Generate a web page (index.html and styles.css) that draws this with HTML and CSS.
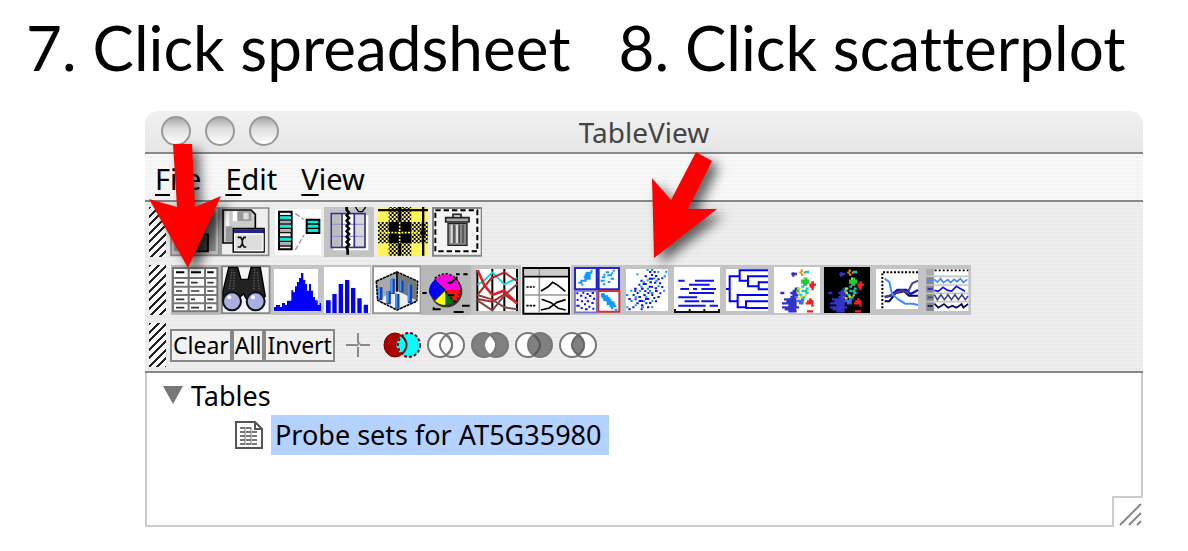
FILE: index.html
```html
<!DOCTYPE html>
<html lang="en">
<head>
<meta charset="utf-8">
<title>TableView</title>
<link rel="stylesheet" href="styles.css">
</head>
<body>
<header class="steps">
  <h1 class="step">7. Click spreadsheet</h1>
  <h1 class="step">8. Click scatterplot</h1>
</header>
<main class="window">
  <div class="titlebar">
    <div class="lights">
      <button class="light" aria-label="Close"></button>
      <button class="light" aria-label="Minimize"></button>
      <button class="light" aria-label="Zoom"></button>
    </div>
    <h2 class="title">TableView</h2>
  </div>
  <nav class="menubar">
    <button class="menu"><u>F</u>ile</button>
    <button class="menu"><u>E</u>dit</button>
    <button class="menu"><u>V</u>iew</button>
  </nav>
  <div class="toolbars">
    <div class="toolbar">
      <span class="grip"></span>
      <div class="tools">
        <button class="tool" aria-label="Open"><svg viewBox="0 0 150 150"><path fill="#bbb" stroke="#888" stroke-width="5" d="M3 3h144v142H3z"/><path fill="#888" d="M12 10h125v122H12z"/><path fill="#444" stroke="#000" stroke-width="5" d="M60 82h54v51H60z"/></svg></button>
        <button class="tool" aria-label="Save"><svg viewBox="0 0 150 150"><path fill="#eee" stroke="#888" stroke-width="5" d="M3 3h143v142H3z"/><path fill="#ccc" stroke="#000" stroke-width="5" d="M9 9h84l13 13v86H9z"/><path fill="#fff" d="M16 13h12v76H16zM38 13h15v30H38z"/><path fill="#999" d="M52 13h42v29H52zM17 58h20v46H17z"/><path fill="#ddd" d="M70 17h16v20H70z"/><path fill="#ddd" stroke="#000" stroke-width="5" d="M40 65h92v70H40z"/><path fill="#228" d="M42 67h88v12H42z"/><path stroke="#fff" stroke-width="4" fill="none" d="M44 81h85v50H44z"/><path stroke="#111" stroke-width="5" fill="none" d="M53 91h9l5 9v10l-6 10h-8M78 91h-6l-5 9v10l5 10h7"/></svg></button>
        <button class="tool tool-narrow" aria-label="Join columns"><svg viewBox="0 0 150 150"><path fill="#fff" d="M12 6h138v138H12z"/><path fill="#eee" stroke="#000" stroke-width="6" d="M24 14h38v113H24z"/><path stroke="#0ed" stroke-width="9" d="M27 32h32M27 58h32M27 97h32"/><path stroke="#aaa" stroke-width="8" d="M27 45h32M27 71h32M27 110h32"/><path stroke="#111" stroke-width="4" d="M24 26h38M24 39h38M24 51h38M24 64h38M24 77h38M24 90h38M24 103h38M24 117h38"/><path stroke="#999" stroke-width="4" stroke-dasharray="16 6" d="M73 20l25 17M73 129l26-45"/><path fill="#0ed" stroke="#000" stroke-width="6" d="M107 38h38v40h-38z"/><path stroke="#000" stroke-width="4" d="M107 51h38M107 64h38"/></svg></button>
        <button class="tool tool-wide" aria-label="Split table"><svg viewBox="12 21 150 150"><path fill="#c3c3c3" d="M12 21h150v150H12z"/><path fill="#fff" d="M40 45h105v106H40z"/><path fill="#d8d8d8" stroke="#33338a" stroke-width="5" d="M34 41h101v101H34z"/><path fill="#bbb" d="M37 44h24v95H37z"/><path fill="#fff" d="M69 44h31v95H69z"/><path stroke="#99c" stroke-width="4" d="M36 73h97M36 109h97"/><path stroke="#33338a" stroke-width="5" d="M66 41v101M103 41v101"/><path fill="none" stroke="#000" stroke-width="8" d="M80 21v9l7 8-7 8 7 8-7 8 7 8-7 8 7 8-7 8 7 8-7 8 7 8-7 8 7 8-7 8 3 8v14"/><path fill="none" stroke="#000" stroke-width="4" d="M106 21l10 14h11l10-14"/></svg></button>
        <button class="tool tool-wide" aria-label="Color matrix"><svg viewBox="175 21 150 150"><defs><pattern id="check" width="12" height="12" patternUnits="userSpaceOnUse"><path d="M0 0h6v6H0zM6 6h6v6H6z"/></pattern></defs><path fill="#fff557" d="M175 21h150v146H175z"/><path fill="url(#check)" d="M207 21h68v45h-68zM207 130h68v37h-68zM175 66h32v64h-32zM275 66h50v64h-50z"/><path d="M175 27h150v7H175zM307 21h7v146h-7zM236 21h8v146h-8zM207 66h68v64h-68z"/><path stroke="#fff557" stroke-width="5" stroke-dasharray="6 4" d="M175 98h150M240 67v63"/><circle cx="310" cy="98" r="9"/></svg></button>
        <button class="tool tool-wide" aria-label="Delete"><svg viewBox="336 21 150 150"><path fill="#f5f5f5" stroke="#888" stroke-width="6" d="M339 24h146v143H339z"/><path fill="none" stroke="#000" stroke-width="6" stroke-dasharray="16 9" d="M346 31h126v123H346z"/><path fill="none" stroke="#222" stroke-width="5" d="M399 52v-9h24v9"/><path fill="#888" stroke="#222" stroke-width="4" d="M384 70h57v66h-57z"/><path fill="#aaa" stroke="#222" stroke-width="5" d="M377 53h70v13h-70z"/><path stroke="#ddd" stroke-width="6" d="M395 74v55M411 74v55"/><path stroke="#444" stroke-width="4" d="M402 74v55M418 74v55M429 74v55"/></svg></button>
      </div>
    </div>
    <div class="toolbar">
      <span class="grip"></span>
      <div class="tools tools-plots">
        <button class="tool" aria-label="Spreadsheet"><svg viewBox="93 21 150 150"><path fill="#bbb" d="M93 21h150v150H93z"/><path fill="#fff" stroke="#777" stroke-width="6" d="M99 30h133v130H99z"/><path stroke="#777" stroke-width="6" d="M99 60h133M99 86h133M99 111h133M99 136h133M146 30v130M195 30v130"/><path stroke="#000" stroke-width="6" d="M108 43h25M153 43h30M202 43h19"/><path stroke="#333" stroke-width="5" d="M108 74h25M153 74h20M202 74h19M108 99h18M153 99h25M202 99h19M108 124h25M153 124h12M202 124h19M108 149h25M153 149h24M202 149h14"/></svg></button>
        <button class="tool" aria-label="Find"><svg viewBox="243 21 150 150"><path fill="#f4f4f4" stroke="#888" stroke-width="6" d="M246 25h143v141H246z"/><path fill="#222" stroke="#000" stroke-width="4" d="M266 28h27l10 36h21l9-36h28l15 87-20 20-39-14-6-14-15 14-47 8V99z"/><path stroke="#555" stroke-width="5" stroke-dasharray="4 4" d="M276 34l-8 64M283 42l-3 56M344 34l-3 64M352 42l6 56"/><circle cx="276" cy="130" r="27" fill="#aaaee2" stroke="#111" stroke-width="6"/><circle cx="347" cy="130" r="27" fill="#aaaee2" stroke="#111" stroke-width="6"/><circle cx="268" cy="118" r="6" fill="#fff"/><circle cx="339" cy="118" r="6" fill="#fff"/></svg></button>
        <button class="tool" aria-label="Density histogram"><svg viewBox="393 21 150 150"><path fill="#c4c3c6" d="M393 21h150v150H393z"/><path fill="#fff" d="M402 33h132v127H402z"/><path fill="#00f" d="M402 159v-12h6v-6h12v6h6v-12h9v6h6v-13h13V97h6v6h5V85h6V72h6V60h6V45h7v21h6v12h5v20h6V78h6v20h6v19h6v10h8v14h6v-6h7v12h6V159z"/></svg></button>
        <button class="tool" aria-label="Bar chart"><svg viewBox="3 21 150 150"><path fill="#c4c3c6" d="M3 21h150v150H3z"/><path fill="#fff" d="M12 27h138v138H12z"/><path fill="#00f" d="M18 127h14v38H18zM37 108h13v57H37zM56 78h13v87H56zM75 66h13v99H75zM93 90h13v75H93zM112 121h13v44h-13zM131 140h13v25h-13z"/></svg></button>
        <button class="tool" aria-label="3D plot"><svg viewBox="153 21 150 150"><path fill="#fff" stroke="#999" stroke-width="6" d="M159 25h143v141H159z"/><path fill="#aaa" stroke="#000" stroke-width="5" stroke-dasharray="9 2" d="M169 70l62-28 62 28-3 60-59 26-58-29z"/><path fill="#777" d="M233 46l57 25v56l-57-29z"/><path fill="#eee" d="M174 124l57-26 56 29-56 26z"/><path stroke="#000" stroke-width="5" d="M231 41v60"/><path stroke="#14b" stroke-width="13" d="M181 88v38M206 99v40M218 62v46M244 68v35M270 80v55M232 108v44"/><path stroke="#49f" stroke-width="6" d="M177 88v34M203 98v36M215 60v45M241 67v33M266 77v53M229 106v43"/></svg></button>
        <button class="tool" aria-label="Pie chart"><svg viewBox="303 21 150 150"><path fill="#b7b7b7" d="M303 21h150v150H303z"/><circle cx="379" cy="100" r="48" fill="#333"/><path fill="#f0d" d="M378 96l-34-30q14-17 36-17 38 4 42 47z"/><path fill="#00f" d="M376 94l-32-28q-18 13-17 37 4 15 20 21z"/><path fill="#f11" d="M376 96h46q0 22-17 36z"/><path fill="#ff0" d="M376 98v43q-18 0-31-12z"/><path fill="#070" d="M378 98v43q15-2 24-11z"/><path fill="none" stroke="#000" stroke-width="4" stroke-dasharray="7 5" d="M344 61q34-28 65 1 26 35-4 70M344 64l60 68"/><path fill="none" stroke="#000" stroke-width="6" d="M307 105h13M408 49h11M430 49h13M382 74h12l18-17M388 112h15M426 143h23M341 148v6h21M401 162h30"/></svg></button>
        <button class="tool" aria-label="Parallel coordinates"><svg viewBox="3 21 150 150"><path fill="#c4c3c6" d="M3 21h150v150H3z"/><path fill="#fff" d="M19 33h126v126H19z"/><path stroke="#000" stroke-width="6" d="M22 36v123M67 33v126M103 33v126M141 33v126"/><g fill="none" stroke-width="6"><path stroke="#0dd" d="M22 80l16-8 29-29 36 36 38-19"/><path stroke="#b22" d="M24 108l40-47 39-18 40 28M22 123l45 8 36-22 39 28"/><path stroke="#d22" stroke-width="8" d="M23 36l20 46 24 29 35-13 40 39"/><path stroke="#844" d="M22 127l45 30 38-47 37-32M22 111l44 13 37 24 39 6"/></g></svg></button>
        <button class="tool" aria-label="Profile table"><svg viewBox="153 21 150 150"><path fill="#fff" stroke="#000" stroke-width="6" d="M160 30h137v137H160z"/><path fill="#ccc" d="M163 33h131v20H163z"/><path stroke="#999" stroke-width="5" d="M163 111h131M208 33v131"/><path stroke="#000" stroke-width="5" d="M160 56h137"/><g fill="none" stroke="#000" stroke-width="5"><path stroke-dasharray="7 3" d="M169 87h25M169 143h30"/><path d="M213 99l20-12 15-14 16 9 22 18M215 124l28 10 22 17 22 5M213 156l25-6 23-17 26-8"/></g></svg></button>
        <button class="tool" aria-label="Scatterplot matrix"><svg viewBox="303 21 150 150"><path fill="#c4c3c6" d="M303 21h150v150H303z"/><path fill="#fff" stroke="#22d" stroke-width="6" d="M315 30h65v64h-65zM386 30h61v64h-61z"/><path fill="#fff" stroke="#77b" stroke-width="5" d="M315 99h65v64h-65z"/><path fill="#fff" stroke="#c33" stroke-width="6" d="M385 99h63v62h-63z"/><path stroke="#19f" stroke-width="6" d="M362 38h6M347 44h20M344 50h18M341 56h21M343 62h19M331 68h19M325 74h12M334 80h6M428 38h6M407 43h10M424 46h6M400 50h6M412 52h14M396 58h10M422 62h10M392 68h12M413 72h8M398 79h8M393 109h12M393 115h22M397 121h24M400 127h25M410 133h23M410 139h26M419 145h20M423 151h7M434 155h8"/><path stroke="#11f" stroke-width="6" d="M319 106h6M337 104h6M350 108h6M365 105h7M330 113h7M344 119h6M357 114h7M369 122h6M320 126h6M333 130h6M350 130h7M364 135h7M319 143h10M342 139h6M355 146h6M332 150h6M345 154h8M367 152h6"/></svg></button>
        <button class="tool" aria-label="Scatterplot"><svg viewBox="3 21 150 150"><path fill="#c4c3c6" d="M3 21h150v150H3z"/><path fill="#fff" d="M18 33h126v126H18z"/><g stroke-width="6"><path stroke="#11e" d="M87 42h7M101 42h6M74 55h7M93 51h6M105 54h7M61 68h7M86 62h13M112 64h7M124 61h6M42 92h8M55 80h6M68 78h12M88 73h8M102 74h7M117 76h6M43 99h6M50 105h6M63 92h8M73 99h6M86 86h13M104 91h7M124 87h6M38 111h6M55 117h8M70 111h7M82 105h6M94 111h6M105 99h8M118 106h6M25 123h7M44 124h6M56 129h13M75 123h13M100 120h6M112 117h7M25 154h7M37 148h6M49 136h7M63 142h7M76 136h6M87 135h7M81 148h7M105 130h6M62 154h6"/><path stroke="#19f" d="M49 49h6M80 36h6M93 36h7M112 42h6M136 41h6M99 61h7M80 67h6M68 73h7M106 68h7M131 55h7M61 86h7M80 92h7M112 85h7M31 98h6M57 99h6M87 99h6M129 98h7M18 111h7M44 117h6M92 105h8M76 117h6M31 129h7M69 130h6M94 129h6M19 148h6M44 142h6M64 148h8M93 148h7"/></g></svg></button>
        <button class="tool" aria-label="Intervals"><svg viewBox="153 21 150 150"><path fill="#c4c3c6" d="M153 21h150v150H153z"/><path fill="#fff" d="M162 27h138v138H162z"/><path stroke="#11e" stroke-width="6" d="M175 68h19M225 68h57M207 80h62M181 93h26M219 93h12M244 93h44M207 105h75M175 118h56M194 130h44M244 130h38M175 143h82M269 143h25"/><path fill="none" stroke="#111" stroke-width="6" d="M165 153v9h132v-9M209 153v9M253 153v9"/></svg></button>
        <button class="tool" aria-label="Dendrogram"><svg viewBox="303 21 150 150"><path fill="#c4c3c6" d="M303 21h150v150H303z"/><path fill="#fff" d="M318 33h126v126H318z"/><path fill="none" stroke="#00f" stroke-width="6" d="M318 93h11M359 55h-30v75h24M444 37h-85v31h25M444 55h-60v30h32M444 73h-28v21h28M444 111h-91v37h25M444 130h-66v20h66"/></svg></button>
        <button class="tool" aria-label="Colored scatterplot"><svg viewBox="3 21 150 150"><defs><g id="cluster" fill="none" stroke-width="7"><path stroke="#33c" d="M64 48h17M70 43v13M31 105h12M74 92h13M68 99h20M61 105h19M67 111h18M61 117h17M42 124h37M49 130h31M36 136h44M55 142h25M36 148h51M44 154h35M55 160h25"/><path stroke="#46e" d="M74 118h10M87 136h14M93 124h10M79 129h22"/><path stroke="#e80" d="M92 38h7M88 44h7M101 44h5M93 50h7"/><path stroke="#0cc" d="M105 42h12M94 86h8M107 92h9M94 99h10M106 105h10M88 111h9M93 118h14"/><path stroke="#2c3" d="M101 62h11M93 68h25M93 74h25M99 80h13M78 99h9M104 99h8"/><path stroke="#cd1" d="M99 62h5M81 92h10M82 105h8M91 116h8M81 121h8M104 112h6"/><path stroke="#e22" d="M124 73h8M118 80h20M119 86h14M124 93h7M117 124h8M111 130h20M107 136h23M124 143h7M111 160h18"/></g></defs><path fill="#c4c3c6" d="M3 21h150v150H3z"/><path fill="#fff" d="M12 27h138v138H12z"/><use href="#cluster"/></svg></button>
        <button class="tool" aria-label="Colored scatterplot on black"><svg viewBox="153 21 150 150"><path fill="#c4c3c6" d="M153 21h150v150H153z"/><path d="M162 27h138v138H162z"/><use href="#cluster" x="144"/></svg></button>
        <button class="tool" aria-label="Line chart"><svg viewBox="303 21 150 150"><path fill="#c4c3c6" d="M303 21h150v150H303z"/><path fill="#fff" d="M318 33h126v120H318z"/><path fill="none" stroke="#000" stroke-width="6" stroke-dasharray="6 5" d="M444 43H337v110"/><g fill="none" stroke-width="6"><path stroke="#11c" stroke-width="7" d="M344 117l18-4 20-17h27l13 12 22-12"/><path stroke="#006" d="M344 130h14l18-24 26-6 15 13h27"/><path stroke="#448" d="M344 118l32-12 22-9 14 8 15-29 17-8"/><path stroke="#48f" d="M344 62l14 10 8 36 20 17 20 12h22l16 4"/></g></svg></button>
        <button class="tool" aria-label="Traces"><svg viewBox="453 21 150 150"><path fill="#c4c3c6" d="M453 21h150v150H453z"/><path fill="#fff" d="M493 33h102v126H493z"/><path fill="#888" d="M469 55h22v104h-22z"/><path fill="#aaa" d="M469 33h22v20h-22z"/><path stroke="#c4c3c6" stroke-width="5" d="M469 55h126M469 81h126M469 106h126M469 131h126"/><path stroke="#000" stroke-width="5" stroke-dasharray="6 6" d="M494 37h101"/><g fill="none" stroke-width="5"><path stroke="#48f" d="M473 68h15M493 64l9 8 10-10 8 12 13-9 9 9 10-10 9 7 10-9 9 11 12-9"/><path stroke="#11e" d="M473 93h15M493 97l12 3 14-12 14 9 12 2 14-14 14 8 12 7"/><path stroke="#448" d="M473 118h15M493 110l9 15 11-15 10 15 11-15 10 15 11-15 10 15 11-15 10 15 8-11"/><path stroke="#006" d="M473 144h15M493 137l12 12 17-11 12 11 13-6 12 6 16-11 5 11 14-11"/></g></svg></button>
      </div>
    </div>
    <div class="toolbar">
      <span class="grip grip-short"></span>
      <div class="selectors">
        <button class="select">Clear</button>
        <button class="select">All</button>
        <button class="select">Invert</button>
      </div>
      <svg class="cross" viewBox="0 0 24 26"><path stroke="#888" stroke-width="2" fill="none" d="M0 13h10M14 13h10M12 1v10M12 15v10M10 14l4-3"/></svg>
      <div class="venns">
        <button class="venn" aria-label="Replace"><svg viewBox="0 0 38 26"><ellipse cx="26" cy="13" rx="11" ry="12" fill="#0ff"/><ellipse cx="12" cy="13" rx="11" ry="12" fill="#a00" stroke="#700"/><path fill="#0ff" d="M19 3q-11 10 0 20 9-10 0-20"/><ellipse cx="26" cy="13" rx="11" ry="12" fill="none" stroke="#800" stroke-width="2" stroke-dasharray="3 2"/><path fill="none" stroke="#700" stroke-width="2" d="M19 4q9 9 0 18"/></svg></button>
        <button class="venn" aria-label="Exclude"><svg viewBox="0 0 38 26"><g fill="#fff" stroke="#777" stroke-width="2"><ellipse cx="25" cy="13" rx="12" ry="12"/><ellipse cx="13" cy="13" rx="12" ry="12"/><path d="M19 3q-12 10 0 20 12-10 0-20"/></g></svg></button>
        <button class="venn" aria-label="Difference"><svg viewBox="0 0 38 26"><g fill="#808080" stroke="#777" stroke-width="2"><ellipse cx="25" cy="13" rx="12" ry="12"/><ellipse cx="13" cy="13" rx="12" ry="12"/></g><path fill="#fff" d="M19 4q-10 9 0 18 10-9 0-18"/></svg></button>
        <button class="venn" aria-label="Right set"><svg viewBox="0 0 38 26"><ellipse cx="13" cy="13" rx="12" ry="12" fill="#fff" stroke="#777" stroke-width="2"/><ellipse cx="25" cy="13" rx="12" ry="12" fill="#808080" stroke="#777" stroke-width="2"/><path fill="none" stroke="#555" stroke-width="2" d="M19 3q12 10 0 20"/></svg></button>
        <button class="venn" aria-label="Intersect"><svg viewBox="0 0 38 26"><g fill="#fff" stroke="#777" stroke-width="2"><ellipse cx="25" cy="13" rx="12" ry="12"/><ellipse cx="13" cy="13" rx="12" ry="12"/></g><path fill="#808080" stroke="#666" stroke-width="2" d="M19 3q-12 10 0 20 12-10 0-20"/></svg></button>
      </div>
    </div>
  </div>
  <section class="tree">
    <div class="branch"><svg class="twisty" viewBox="0 0 20 18"><path fill="#777" d="M0 0h20L10 18z"/></svg><span>Tables</span></div>
    <div class="leaf"><svg class="sheet" viewBox="0 0 28 28"><path fill="#fff" stroke="#555" stroke-width="2" d="M1 1h19l7 7v19H1z"/><path fill="none" stroke="#555" stroke-width="2" d="M20 1v7h7"/><path stroke="#777" stroke-width="2" stroke-dasharray="5 1" d="M5 7h12M5 11h18M5 15h18M5 19h18M5 23h18"/><path stroke="#777" d="M10 6v18M16 6v18"/></svg><span class="selected">Probe sets for AT5G35980</span></div>
    <svg class="resize" viewBox="0 0 31 31"><path fill="#fff" d="M0 0h31v31H0z"/><path fill="none" stroke="#ccc" stroke-width="2" d="M31 1H1v30"/><path stroke="#888" stroke-width="2" d="M8 29L29 8M17 29l12-12M25 29l4-4"/></svg>
  </section>
  <svg class="arrow arrow-left" viewBox="149 144 72 124"><path fill="red" d="M173 144h19l3 63 26-11-33 72-39-69 28 8z"/></svg>
  <svg class="arrow arrow-right" viewBox="652 152 65 106"><path fill="red" d="M696 152l16 9-24 48h29l-63 49-2-80 19 22z"/></svg>
</main>
</body>
</html>
```
FILE: styles.css
```css
* { box-sizing: border-box; }
body {
  margin: 0;
  background: #fff;
  color: #000;
  font-family: "Noto Sans", "Open Sans", sans-serif;
  font-size: 27px;
}
button {
  margin: 0;
  padding: 0;
  border: 0;
  background: none;
  color: inherit;
  font: inherit;
}
svg { display: block; }
.steps {
  display: flex;
  gap: 48px;
  padding: 8px 26px 0;
  white-space: nowrap;
}
.step {
  margin: 0;
  font: 400 62px/78px Lato, sans-serif;
  font-variant-ligatures: none;
}
.window {
  position: relative;
  margin: 25px 45px 24px 145px;
  border-radius: 14px 14px 0 0;
  background: #eee;
}
.titlebar {
  position: relative;
  display: flex;
  align-items: center;
  justify-content: center;
  height: 43px;
  border-bottom: 2px solid #888;
  border-radius: 14px 14px 0 0;
  background: linear-gradient(#f1f1f1, #e6e6e6);
}
.lights {
  position: absolute;
  left: 16px;
  top: 5px;
  display: flex;
  gap: 14px;
}
.light {
  width: 30px;
  height: 30px;
  border: 2px solid #999;
  border-radius: 50%;
  background: linear-gradient(#aaa, #ddd 40%, #fff);
}
.title {
  margin: 0;
  font-size: 28px;
  font-weight: 400;
  line-height: 40px;
  color: #444;
}
.menubar {
  display: flex;
  gap: 24px;
  height: 48px;
  padding: 4px 10px 0;
  border-bottom: 2px solid #888;
  background: repeating-linear-gradient(#f8f8f8 0 2px, #f4f4f4 2px 4px);
}
.menu { font-size: 29px; line-height: 42px; }
.menu u { text-decoration-thickness: 2px; text-underline-offset: 4px; }
.toolbars {
  display: flex;
  flex-direction: column;
  gap: 8px;
  padding: 5px 4px 4px;
  border-bottom: 2px solid #888;
  background: repeating-linear-gradient(#eee 0 2px, #eaeaea 2px 4px);
}
.toolbar { display: flex; align-items: center; }
.grip {
  width: 17px;
  height: 50px;
  background: repeating-linear-gradient(135deg, #222 0 2px, #fff 2px 6px);
}
.grip-short { height: 44px; }
.tools { display: flex; margin-left: 4px; }
.tools-plots { margin-left: 5px; }
.tool svg { width: 50px; height: 50px; }
.tool-narrow { padding: 0 1px; }
.tool-wide { padding: 0 2px; }
.selectors { display: flex; margin-left: 4px; }
.select {
  height: 33px;
  padding: 0 1px;
  border: 2px solid #888;
  background: #f1f1f1;
  font-size: 23px;
  line-height: 28px;
}
.cross { width: 24px; height: 26px; margin-left: 11px; }
.venns { display: flex; gap: 6px; margin-left: 13px; }
.venn svg { width: 38px; height: 26px; }
.tree {
  position: relative;
  min-height: 154px;
  padding: 2px 16px 0;
  border: 2px solid #ccc;
  border-top: 0;
  background: #fff;
}
.branch, .leaf { display: flex; align-items: center; height: 40px; }
.branch { gap: 8px; }
.leaf { gap: 8px; padding-left: 72px; }
.twisty { width: 20px; height: 18px; }
.sheet { width: 28px; height: 28px; }
.selected {
  padding: 0 8px 0 4px;
  background: #b4d2ff;
  line-height: 40px;
}
.resize {
  position: absolute;
  right: -2px;
  bottom: -2px;
  width: 31px;
  height: 31px;
}
.arrow {
  position: absolute;
  overflow: visible;
  pointer-events: none;
  filter: drop-shadow(7px 6px 6px rgba(0, 0, 0, 0.6));
}
.arrow-left { left: 4px; top: 33px; width: 72px; height: 124px; }
.arrow-right { left: 507px; top: 41px; width: 65px; height: 106px; }
```
